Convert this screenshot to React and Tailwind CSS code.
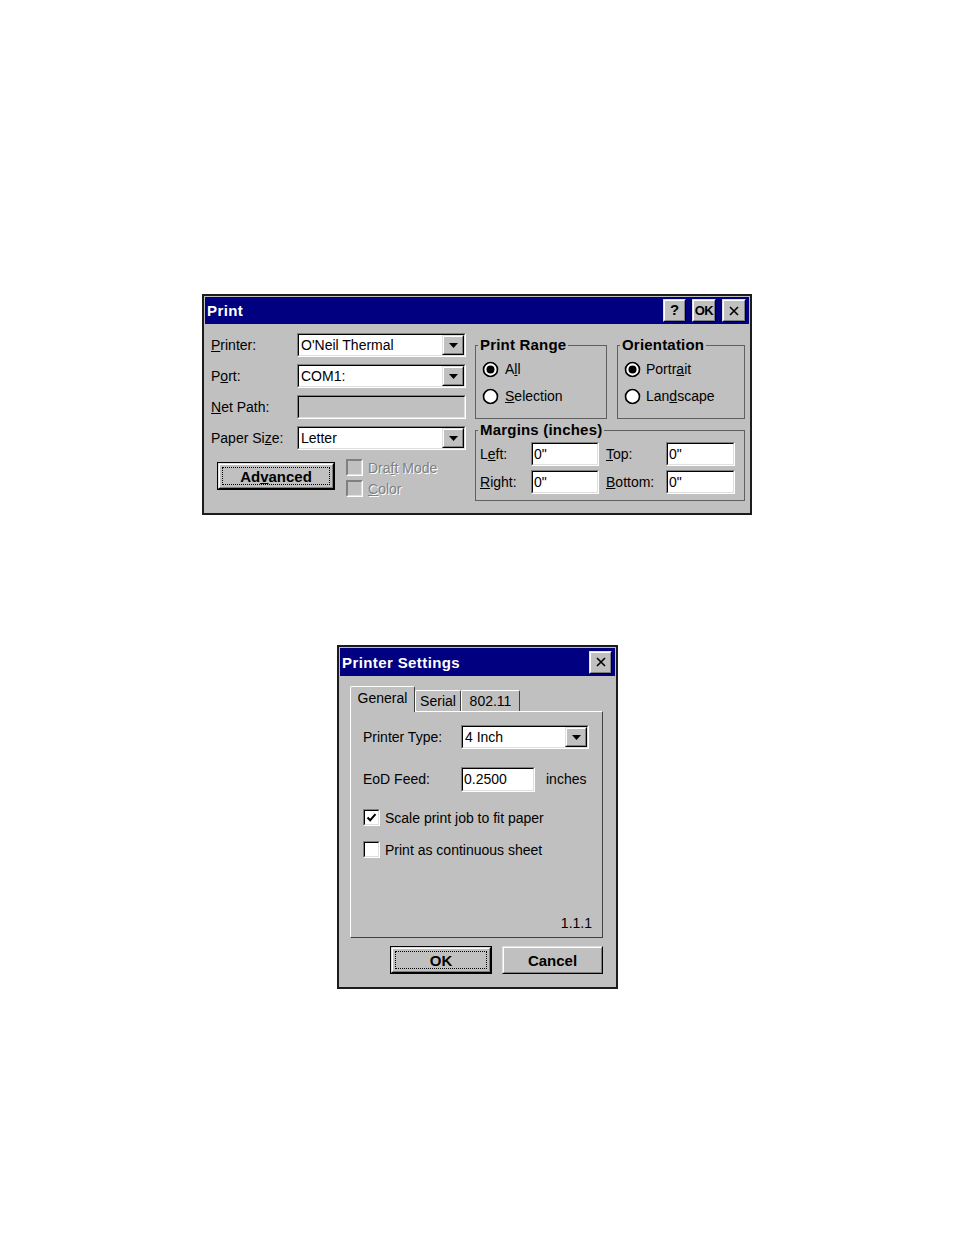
import React from 'react';

const FONT = "font-['Liberation_Sans',Arial,sans-serif]";

function Sunken({ className = '', disabled = false, children }) {
  return (
    <div className={`border border-t-[#808080] border-l-[#808080] border-b-white border-r-white ${className}`}>
      <div
        className={`h-full w-full border border-t-black border-l-black border-b-[#dfdfdf] border-r-[#dfdfdf] ${
          disabled ? 'bg-[#c0c0c0]' : 'bg-white'
        }`}
      >
        {children}
      </div>
    </div>
  );
}

function Raised({ className = '', children }) {
  return (
    <div className={`border border-t-[#dfdfdf] border-l-[#dfdfdf] border-b-black border-r-black bg-[#c0c0c0] ${className}`}>
      <div className="flex h-full w-full items-center justify-center border border-t-white border-l-white border-b-[#808080] border-r-[#808080]">
        {children}
      </div>
    </div>
  );
}

function DefaultButton({ className = '', children }) {
  return (
    <div className={`border border-black ${className}`}>
      <Raised className="h-full w-full">
        <div className="m-[2px] flex h-[calc(100%-4px)] w-[calc(100%-4px)] items-center justify-center border border-dotted border-black">
          {children}
        </div>
      </Raised>
    </div>
  );
}

function Arrow() {
  return (
    <svg width="9" height="5" viewBox="0 0 9 5">
      <polygon points="0,0 9,0 4.5,5" fill="black" />
    </svg>
  );
}

function Combo({ value, className = '' }) {
  return (
    <Sunken className={`h-[24px] ${className}`}>
      <div className="flex h-full items-center">
        <span className="flex-1 pl-[2px] text-[14px] leading-none">{value}</span>
        <Raised className="h-full w-[22px]">
          <Arrow />
        </Raised>
      </div>
    </Sunken>
  );
}

function Edit({ value, className = '' }) {
  return (
    <Sunken className={className}>
      <div className="flex h-full items-center pl-[1px] text-[14px] leading-none">{value}</div>
    </Sunken>
  );
}

function Check({ checked, disabled }) {
  if (disabled) {
    return (
      <div className="h-[17px] w-[17px] shrink-0 border border-t-[#808080] border-l-[#808080] border-b-white border-r-white">
        <div className="h-full w-full border border-t-[#808080] border-l-[#808080] border-b-[#dfdfdf] border-r-[#dfdfdf] bg-[#c0c0c0]" />
      </div>
    );
  }
  return (
    <Sunken className="h-[17px] w-[17px] shrink-0">
      {checked && (
        <svg viewBox="0 0 13 13" className="h-full w-full">
          <path d="M2.5 6.5 L5.2 9.2 L10.5 3.2" stroke="black" strokeWidth="2" fill="none" />
        </svg>
      )}
    </Sunken>
  );
}

function Radio({ checked }) {
  return (
    <svg width="17" height="17" viewBox="0 0 17 17" className="shrink-0">
      <circle cx="8.5" cy="8.5" r="8" fill="#dfdfdf" />
      <circle cx="8.5" cy="8.5" r="7" fill="white" stroke="black" strokeWidth="1.7" />
      {checked && <circle cx="8.5" cy="8.5" r="4" fill="black" />}
    </svg>
  );
}

function Group({ title, className = '', children }) {
  return (
    <fieldset className={`border border-[#606060] ${className}`}>
      <legend className="ml-[2px] px-[2px] text-[15px] font-bold leading-[16px] tracking-[0.2px]">{title}</legend>
      {children}
    </fieldset>
  );
}

function CloseGlyph() {
  return (
    <svg width="10" height="10" viewBox="0 0 10 10">
      <path d="M1 1 L9 9 M9 1 L1 9" stroke="black" strokeWidth="1.6" />
    </svg>
  );
}

function TitleBar({ title, children }) {
  return (
    <div className="flex h-full items-center justify-between bg-[#000080] pl-[2px] pr-[3px]">
      <span className="text-[15px] font-bold leading-none tracking-[0.4px] text-white">{title}</span>
      <div className="flex gap-[6px]">{children}</div>
    </div>
  );
}

function PrintDialog() {
  const rows = [
    { label: <><u>P</u>rinter:</>, combo: "O'Neil Thermal" },
    { label: <>P<u>o</u>rt:</>, combo: 'COM1:' },
    { label: <><u>N</u>et Path:</>, disabled: true },
    { label: <>Paper Si<u>z</u>e:</>, combo: 'Letter' },
  ];

  return (
    <div className="ml-[202px] h-[221px] w-[550px] border-2 border-[#1c1c1c] bg-[#c0c0c0] p-[1px]">
      <div className="h-[27px]">
        <TitleBar title="Print">
          <Raised className="h-[23px] w-[23px] text-[15px] font-bold">?</Raised>
          <Raised className="h-[23px] w-[24px] text-[13px] font-bold tracking-[-0.5px]">OK</Raised>
          <Raised className="h-[23px] w-[24px]">
            <CloseGlyph />
          </Raised>
        </TitleBar>
      </div>

      <div className="flex items-start pl-[6px] pt-[9px]">
        {/* left column */}
        <div className="w-[255px]">
          <div className="flex flex-col gap-[7px]">
            {rows.map((r, i) => (
              <div key={i} className="flex h-[24px] items-center">
                <span className="w-[86px] text-[14px]">{r.label}</span>
                {r.disabled ? (
                  <Sunken disabled className="h-[24px] w-[169px]" />
                ) : (
                  <Combo value={r.combo} className="w-[169px]" />
                )}
              </div>
            ))}
          </div>

          <div className="mt-[9px] flex items-start">
            <DefaultButton className="ml-[6px] mt-[3px] h-[28px] w-[118px]">
              <span className="text-[15px] font-bold leading-none">
                Ad<u>v</u>anced
              </span>
            </DefaultButton>
            <div className="ml-[11px] flex flex-col gap-[4px] text-[14px] text-[#808080] [text-shadow:1px_1px_0_#fff]">
              <div className="flex items-center gap-[5px]">
                <Check disabled />
                <span className="leading-none">
                  Dra<u>f</u>t Mode
                </span>
              </div>
              <div className="flex items-center gap-[5px]">
                <Check disabled />
                <span className="leading-none">
                  <u>C</u>olor
                </span>
              </div>
            </div>
          </div>
        </div>

        {/* right column */}
        <div className="ml-[9px] mt-[4px] w-[270px]">
          <div className="flex gap-[10px]">
            <Group title="Print Range" className="h-[82px] w-[132px]">
              <div className="flex flex-col gap-[7px] pl-[6px] pt-[6px]">
                <div className="flex h-[20px] items-center gap-[6px] text-[14px]">
                  <Radio checked />
                  <span>
                    A<u>l</u>l
                  </span>
                </div>
                <div className="flex h-[20px] items-center gap-[6px] text-[14px]">
                  <Radio />
                  <span>
                    <u>S</u>election
                  </span>
                </div>
              </div>
            </Group>
            <Group title="Orientation" className="h-[82px] w-[128px]">
              <div className="flex flex-col gap-[7px] pl-[6px] pt-[6px]">
                <div className="flex h-[20px] items-center gap-[5px] text-[14px]">
                  <Radio checked />
                  <span>
                    Portr<u>a</u>it
                  </span>
                </div>
                <div className="flex h-[20px] items-center gap-[5px] text-[14px]">
                  <Radio />
                  <span>
                    Lan<u>d</u>scape
                  </span>
                </div>
              </div>
            </Group>
          </div>

          <Group title="Margins (inches)" className="mt-[3px] h-[79px] w-[270px]">
            <div className="flex flex-col gap-[4px] pl-[4px] pt-[4px] text-[14px]">
              <div className="flex items-center">
                <span className="w-[51px]">
                  L<u>e</u>ft:
                </span>
                <Edit value={'0"'} className="h-[24px] w-[68px]" />
                <span className="ml-[7px] w-[60px]">
                  <u>T</u>op:
                </span>
                <Edit value={'0"'} className="h-[24px] w-[69px]" />
              </div>
              <div className="flex items-center">
                <span className="w-[51px]">
                  <u>R</u>ight:
                </span>
                <Edit value={'0"'} className="h-[24px] w-[68px]" />
                <span className="ml-[7px] w-[60px]">
                  <u>B</u>ottom:
                </span>
                <Edit value={'0"'} className="h-[24px] w-[69px]" />
              </div>
            </div>
          </Group>
        </div>
      </div>
    </div>
  );
}

function Tab({ label, active, className = '' }) {
  return (
    <div
      className={`flex items-center justify-center rounded-t-[2px] border-l border-t border-r border-l-white border-t-white border-r-[#404040] text-[14px] ${
        active ? 'relative z-10 -mb-[1px] h-[26px] bg-[#c0c0c0] pb-[3px]' : 'h-[21px]'
      } ${className}`}
    >
      {label}
    </div>
  );
}

function SettingsDialog() {
  return (
    <div className="ml-[337px] mt-[130px] h-[344px] w-[281px] border-2 border-[#1c1c1c] bg-[#c0c0c0] p-[1px]">
      <div className="h-[28px]">
        <TitleBar title="Printer Settings">
          <Raised className="h-[23px] w-[23px]">
            <CloseGlyph />
          </Raised>
        </TitleBar>
      </div>

      <div className="pl-[10px] pt-[10px]">
        <div className="flex items-end">
          <Tab label="General" active className="w-[65px]" />
          <Tab label="Serial" className="w-[46px]" />
          <Tab label="802.11" className="w-[59px]" />
        </div>

        <div className="flex h-[227px] w-[253px] flex-col border border-t-white border-l-white border-b-[#404040] border-r-[#404040] pl-[12px] pr-[10px] pt-[13px] text-[14px]">
          <div className="flex items-center">
            <span className="w-[98px]">Printer Type:</span>
            <Combo value="4 Inch" className="w-[128px]" />
          </div>
          <div className="mt-[18px] flex items-center">
            <span className="w-[98px]">EoD Feed:</span>
            <Sunken className="h-[25px] w-[74px]">
              <div className="flex h-full items-start pl-[1px] pt-[1px] leading-[18px]">0.2500</div>
            </Sunken>
            <span className="ml-[11px]">inches</span>
          </div>
          <div className="mt-[17px] flex items-center gap-[5px]">
            <Check checked />
            <span className="leading-none">Scale print job to fit paper</span>
          </div>
          <div className="mt-[15px] flex items-center gap-[5px]">
            <Check />
            <span className="leading-none">Print as continuous sheet</span>
          </div>
          <div className="flex flex-1 items-end justify-end pb-[7px]">
            <span className="leading-none">1.1.1</span>
          </div>
        </div>

        <div className="mt-[8px] flex w-[253px] justify-end gap-[10px]">
          <DefaultButton className="h-[28px] w-[102px]">
            <span className="text-[15px] font-bold leading-none">OK</span>
          </DefaultButton>
          <Raised className="h-[28px] w-[101px]">
            <span className="text-[15px] font-bold leading-none">Cancel</span>
          </Raised>
        </div>
      </div>
    </div>
  );
}

export default function App() {
  return (
    <div className={`min-h-[1235px] bg-white pt-[294px] text-black ${FONT}`}>
      <PrintDialog />
      <SettingsDialog />
    </div>
  );
}
